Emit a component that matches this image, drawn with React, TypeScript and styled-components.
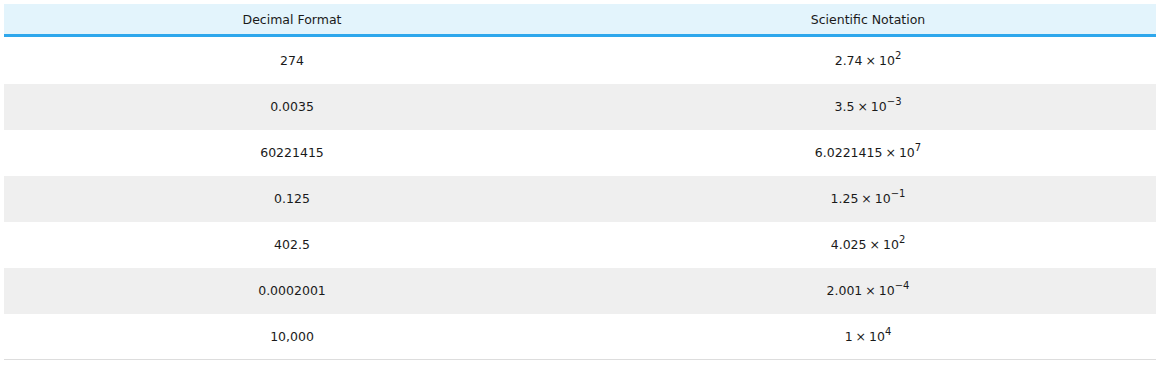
import React from "react";
import styled, { createGlobalStyle } from "styled-components";

const GlobalStyle = createGlobalStyle`
    html, body {
        margin: 0;
        padding: 0;
        background: #ffffff;
    }
    body {
        padding: 4px 11px 0 4px;
        font-family: "DejaVu Sans", Verdana, sans-serif;
        color: #1a1a1a;
    }
`;

const Table = styled.table`
    width: 1152px;
    border-collapse: collapse;
    table-layout: fixed;
    font-size: 12.5px;
`;

const HeadCell = styled.th`
    height: 30px;
    padding: 0;
    background-color: #e3f4fc;
    border-bottom: 3px solid #2ea7ec;
    font-weight: normal;
    text-align: center;
    vertical-align: middle;
`;

const Row = styled.tr<{ $shade: boolean; $first: boolean }>`
    height: ${(p) => (p.$first ? 48 : 46)}px;
    background-color: ${(p) => (p.$shade ? "#efefef" : "#ffffff")};
    &:last-child {
        border-bottom: 1px solid #dddddd;
    }
`;

const Cell = styled.td`
    padding: 0;
    text-align: center;
    vertical-align: middle;
`;

const Times = styled.span`
    margin: 0 3px;
`;

const Sup = styled.sup`
    font-size: 10px;
    line-height: 0;
    position: relative;
    top: -1px;
`;

const rows = [
    { dec: "274", mant: "2.74", exp: "2" },
    { dec: "0.0035", mant: "3.5", exp: "\u22123" },
    { dec: "60221415", mant: "6.0221415", exp: "7" },
    { dec: "0.125", mant: "1.25", exp: "\u22121" },
    { dec: "402.5", mant: "4.025", exp: "2" },
    { dec: "0.0002001", mant: "2.001", exp: "\u22124" },
    { dec: "10,000", mant: "1", exp: "4" },
];

function App() {
    return (
        <>
            <GlobalStyle />
            <Table>
                <thead>
                    <tr>
                        <HeadCell>Decimal Format</HeadCell>
                        <HeadCell>Scientific Notation</HeadCell>
                    </tr>
                </thead>
                <tbody>
                    {rows.map((r, i) => (
                        <Row key={r.dec} $shade={i % 2 === 1} $first={i === 0}>
                            <Cell>{r.dec}</Cell>
                            <Cell>
                                {r.mant}
                                <Times>×</Times>10<Sup>{r.exp}</Sup>
                            </Cell>
                        </Row>
                    ))}
                </tbody>
            </Table>
        </>
    );
}

export default App;
